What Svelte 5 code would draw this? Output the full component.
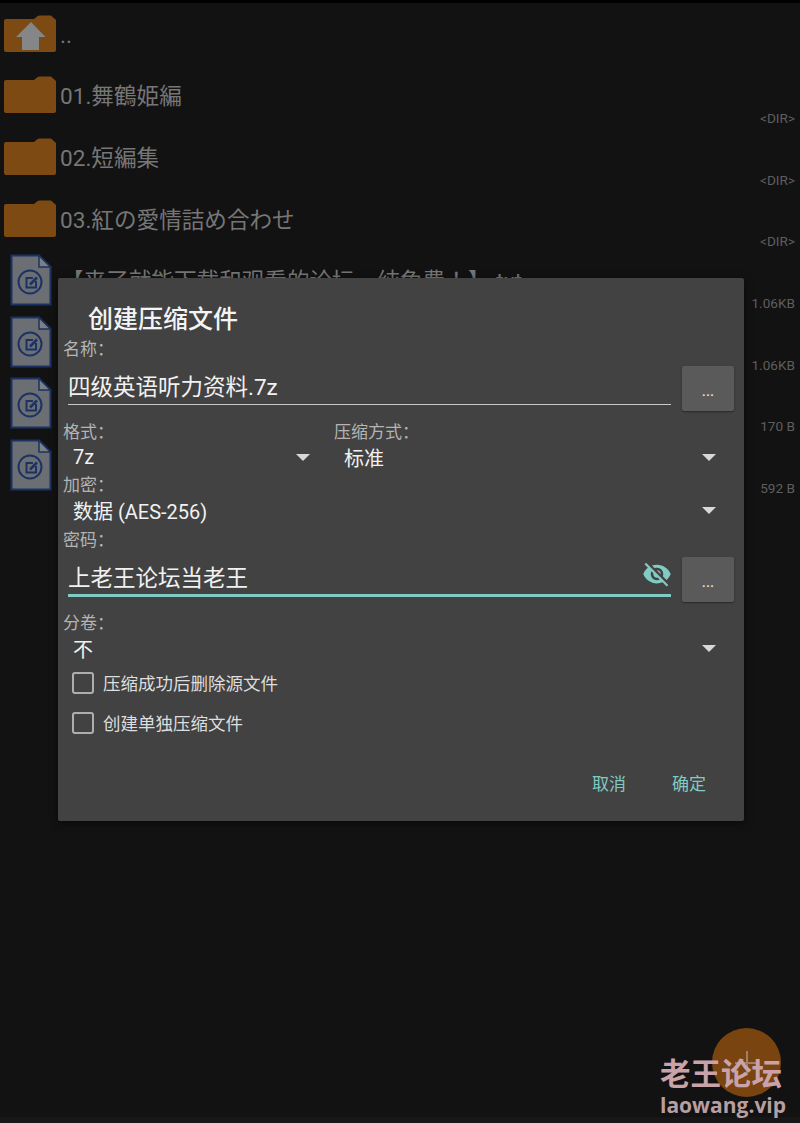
<script lang="ts">
	const rows = [
		{ kind: 'up', name: '..', size: '' },
		{ kind: 'folder', name: '01.舞鶴姫編', size: '<DIR>' },
		{ kind: 'folder', name: '02.短編集', size: '<DIR>' },
		{ kind: 'folder', name: '03.紅の愛情詰め合わせ', size: '<DIR>' },
		{ kind: 'file', name: '【来了就能下载和观看的论坛，纯免费！】.txt', size: '1.06KB' },
		{ kind: 'file', name: '', size: '1.06KB' },
		{ kind: 'file', name: '', size: '170 B' },
		{ kind: 'file', name: '', size: '592 B' }
	];
	const eye =
		'M12 7c2.76 0 5 2.24 5 5 0 .65-.13 1.26-.36 1.83l2.92 2.92c1.51-1.26 2.7-2.89 3.43-4.75-1.73-4.39-6-7.5-11-7.5-1.4 0-2.74.25-3.98.7l2.16 2.16C10.74 7.13 11.35 7 12 7zM2 4.27l2.28 2.28.46.46C3.08 8.3 1.78 10.02 1 12c1.73 4.39 6 7.5 11 7.5 1.55 0 3.03-.3 4.38-.84l.42.42L19.73 22 21 20.73 3.27 3 2 4.27zM7.53 9.8l1.55 1.55c-.05.21-.08.43-.08.65 0 1.66 1.34 3 3 3 .22 0 .44-.03.65-.08l1.55 1.55c-.67.33-1.41.53-2.2.53-2.76 0-5-2.24-5-5 0-.79.2-1.53.53-2.2zm4.31-.78l3.15 3.15.02-.16c0-1.66-1.34-3-3-3l-.17.01z';
</script>

{#snippet arrow()}
	<svg class="arrow" width="14" height="7" viewBox="0 0 14 7"><path d="M0 0h14L7 7z" fill="#d8d8d8" /></svg>
{/snippet}

<div class="screen">
	<ul class="list">
		{#each rows as row}
			<li class="row">
				{#if row.kind === 'file'}
					<svg class="file-icon" width="42" height="52" viewBox="0 0 42 52">
						<path d="M1.5 1.500H29L40.500 13V50.500H1.500Z" fill="#6b6f74" stroke="#1b3263" stroke-width="2" />
						<path d="M29 1.500V13H40.500Z" fill="#7c8084" stroke="#1b3263" stroke-width="1.5" />
						<circle cx="20" cy="28" r="11.5" fill="none" stroke="#1b3263" stroke-width="2" />
						<path d="M26 27V33.500H16.500V24H23" fill="none" stroke="#1b3263" stroke-width="2" />
						<path d="M20 30.500l7-7" stroke="#1b3263" stroke-width="2.500" />
					</svg>
				{:else}
					<svg class="folder-icon" width="52" height="38" viewBox="0 0 52 38">
						<path d="M0 6Q0 4 2 4H30L33 1.500Q34 .5 36 .5H47L52 5V35Q52 37 50 37H2Q0 37 0 35Z" fill="#7d4a14" />
						{#if row.kind === 'up'}
							<path d="M27 7L41.500 22H35V35H18V22H12Z" fill="#858688" />
						{/if}
					</svg>
				{/if}
				<span class="name">{row.name}</span>
				<span class="size">{row.size}</span>
			</li>
		{/each}
	</ul>

	<div class="navbar"></div>

	<div class="fab">
		<svg width="24" height="24" viewBox="0 0 24 24"><path d="M12 0v24M0 12h24" stroke="#9c8168" stroke-width="2" /></svg>
	</div>

	<div class="watermark">
		<div class="wm-title">老王论坛</div>
		<div class="wm-url">laowang.vip</div>
	</div>

	<div class="dialog">
		<h2 class="title">创建压缩文件</h2>

		<div class="label">名称：</div>
		<div class="field-row first">
			<div class="field"><span>四级英语听力资料.7z</span></div>
			<div class="more">...</div>
		</div>

		<div class="two-col">
			<div>
				<div class="label">格式：</div>
				<div class="select left">7z{@render arrow()}</div>
			</div>
			<div>
				<div class="label">压缩方式：</div>
				<div class="select">标准{@render arrow()}</div>
			</div>
		</div>

		<div class="label gap-s">加密：</div>
		<div class="select">数据 (AES-256){@render arrow()}</div>

		<div class="label gap-m">密码：</div>
		<div class="field-row">
			<div class="field active">
				<span>上老王论坛当老王</span>
				<svg class="eye" width="30" height="30" viewBox="0 0 24 24"><path d={eye} fill="#80cbc4" /></svg>
			</div>
			<div class="more">...</div>
		</div>

		<div class="label gap-l">分卷：</div>
		<div class="select">不{@render arrow()}</div>

		<div class="checks">
			<div class="check"><span class="box"></span><span class="check-text">压缩成功后删除源文件</span></div>
			<div class="check"><span class="box"></span><span class="check-text">创建单独压缩文件</span></div>
		</div>

		<div class="actions">
			<span>取消</span>
			<span>确定</span>
		</div>
	</div>
</div>

<style>
	:global(body) {
		margin: 0;
		background: #121212;
	}
	.screen {
		position: relative;
		width: 800px;
		height: 1123px;
		overflow: hidden;
		background: #121212;
		border-top: 3px solid #000;
		box-sizing: border-box;
		font-family: Roboto, 'Noto Sans CJK SC', sans-serif;
	}

	.list {
		list-style: none;
		margin: 0;
		padding: 0;
	}
	.row {
		display: flex;
		align-items: center;
		height: 61.6px;
		padding: 0 5px 0 4px;
		box-sizing: border-box;
	}
	.folder-icon {
		flex: none;
		margin-right: 4px;
	}
	.file-icon {
		flex: none;
		margin: 0 9px 0 6px;
	}
	.name {
		flex: 1;
		min-width: 0;
		padding-top: 4px;
		font-size: 22.6px;
		line-height: 28px;
		color: #767676;
		white-space: nowrap;
		font-family: Roboto, 'Noto Sans CJK JP', sans-serif;
	}
	.size {
		align-self: flex-end;
		margin-bottom: 0;
		font-size: 13.6px;
		line-height: 16px;
		color: #5e5e5e;
	}

	.navbar {
		position: absolute;
		left: 0;
		right: 0;
		bottom: 0;
		height: 6px;
		background: #171717;
	}

	.dialog {
		position: absolute;
		left: 58px;
		top: 275px;
		width: 686px;
		height: 543px;
		box-sizing: border-box;
		padding: 24px 10px 0 5px;
		background: #424242;
		border-radius: 2px;
		box-shadow: 0 2px 8px rgba(0, 0, 0, 0.5);
		color: #f1f1f1;
	}
	.title {
		margin: 0 0 0 25px;
		height: 35px;
		font-size: 25px;
		line-height: 36px;
		font-weight: 500;
		color: #f4f4f4;
	}
	.label {
		height: 22px;
		font-size: 17px;
		line-height: 24px;
		color: #b4b4b4;
	}
	.gap-s { margin-top: 4px; }
	.gap-m { margin-top: 7px; }
	.gap-l { margin-top: 9px; }

	.field-row {
		display: flex;
		gap: 11px;
		margin: 7px 0 0 5px;
	}
	.field-row.first {
		margin-bottom: 9px;
	}
	.field {
		flex: 1;
		display: flex;
		align-items: center;
		justify-content: space-between;
		height: 39px;
		box-sizing: border-box;
		border-bottom: 1.5px solid #c8c8c8;
		font-size: 22.5px;
	}
	.field.active {
		height: 40px;
		border-bottom: 3px solid #80cbc4;
	}
	.eye {
		margin-top: -4px;
		margin-right: -1px;
	}
	.more {
		flex: none;
		width: 52px;
		height: 45px;
		border-radius: 2px;
		background: #5a5a5a;
		box-shadow: 0 1px 2px rgba(0, 0, 0, 0.4);
		text-align: center;
		font-size: 16px;
		line-height: 50px;
		color: #f0f0f0;
	}

	.two-col {
		display: grid;
		grid-template-columns: 271px 1fr;
	}
	.select {
		display: flex;
		align-items: center;
		justify-content: space-between;
		height: 22px;
		margin: 4px 0 1px;
		padding: 0 18px 0 10px;
		font-size: 20px;
	}
	.select.left {
		padding-right: 24px;
	}

	.checks {
		display: flex;
		flex-direction: column;
		gap: 12px;
		margin-top: 10px;
	}
	.check {
		display: flex;
		align-items: center;
		gap: 9px;
		height: 28px;
		margin-left: 9px;
		font-size: 17.5px;
		color: #dedede;
	}
	.check-text {
		margin-bottom: 2px;
	}
	.box {
		width: 22px;
		height: 22px;
		box-sizing: border-box;
		border: 2.5px solid #aeaeae;
		border-radius: 3px;
	}

	.actions {
		display: flex;
		justify-content: flex-end;
		gap: 46px;
		margin-top: 29px;
		padding-right: 28px;
		font-size: 17px;
		line-height: 36px;
		color: #80cbc4;
	}

	.fab {
		position: absolute;
		left: 712px;
		top: 1025px;
		display: flex;
		align-items: center;
		justify-content: center;
		width: 69px;
		height: 69px;
		border-radius: 50%;
		background: #7a4410;
	}
	.watermark {
		position: absolute;
		left: 660px;
		top: 1054px;
		color: #c9a3a9;
		font-weight: 700;
		white-space: nowrap;
	}
	.wm-title {
		font-size: 30.5px;
		line-height: 36px;
	}
	.wm-url {
		font-size: 21px;
		line-height: 25px;
		color: #b89ea3;
		font-family: 'Open Sans', sans-serif;
	}
</style>
